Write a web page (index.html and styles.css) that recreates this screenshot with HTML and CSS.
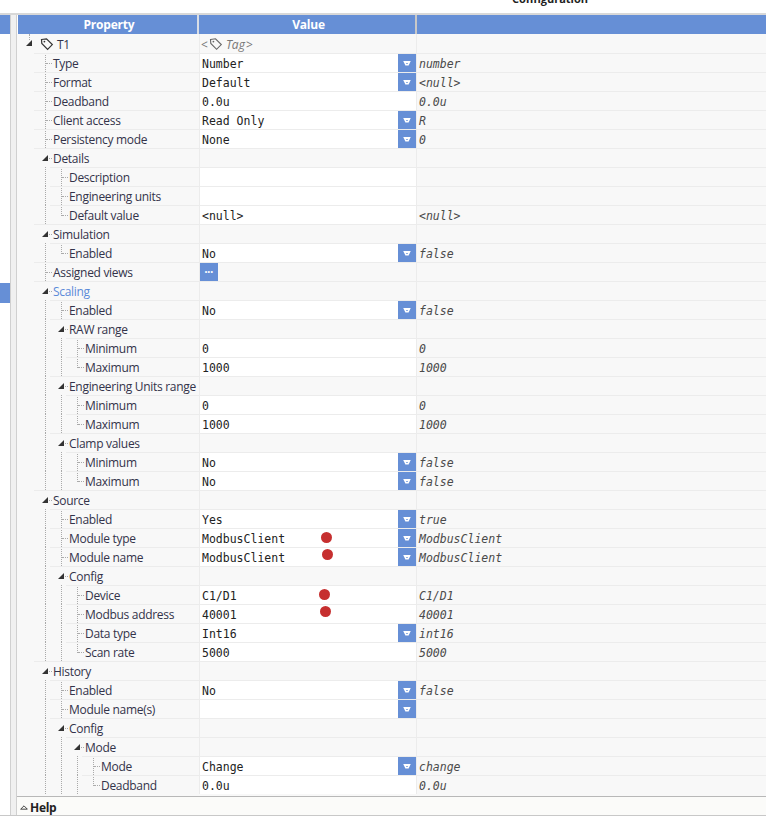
FILE: index.html
```html
<!DOCTYPE html>
<html lang="en">
<head>
<meta charset="utf-8">
<title>Tag configuration</title>
<link rel="stylesheet" href="styles.css">
</head>
<body>
<div class="window">
  <div class="topbar"><span class="topbar-title">Configuration</span></div>
  <div class="workspace">
    <aside class="side">
      <div class="side-head"></div>
      <div class="side-list"><div class="side-sel"></div></div>
    </aside>
    <div class="splitter"></div>
    <main class="panel">
      <div class="header">
        <div class="hcell hprop">Property</div>
        <div class="hcell hval">Value</div>
        <div class="hcell hraw"></div>
      </div>
      <div class="rows">

        <div class="row root">
          <div class="prop"><div class="body"><span class="mk open rootmk"><i class="tri"></i></span><svg class="tag" viewBox="0 0 14 14"><path d="M1.5 2.5 L6.5 1.8 L12.3 7.6 L7.6 12.3 L1.8 6.5 Z" fill="none" stroke="#333" stroke-width="1.2"/><circle cx="4.4" cy="4.6" r=".9" fill="#333"/></svg><span class="lab">T1</span></div></div>
          <div class="val group tagval"><span class="ang">&lt;</span><svg class="tag gray" viewBox="0 0 14 14"><path d="M1.5 2.5 L6.5 1.8 L12.3 7.6 L7.6 12.3 L1.8 6.5 Z" fill="none" stroke="#666" stroke-width="1.1"/><circle cx="4.4" cy="4.6" r=".9" fill="#666"/></svg><em>Tag</em><span class="ang">&gt;</span></div>
          <div class="raw"></div>
        </div>

        <div class="row"><div class="prop"><span class="g"></span><div class="body"><span class="mk tee"></span><span class="lab">Type</span></div></div><div class="val"><span class="txt">Number</span><span class="dd"><i></i></span></div><div class="raw">number</div></div>
        <div class="row"><div class="prop"><span class="g"></span><div class="body"><span class="mk tee"></span><span class="lab">Format</span></div></div><div class="val"><span class="txt">Default</span><span class="dd"><i></i></span></div><div class="raw">&lt;null&gt;</div></div>
        <div class="row"><div class="prop"><span class="g"></span><div class="body"><span class="mk tee"></span><span class="lab">Deadband</span></div></div><div class="val"><span class="txt">0.0u</span></div><div class="raw">0.0u</div></div>
        <div class="row"><div class="prop"><span class="g"></span><div class="body"><span class="mk tee"></span><span class="lab">Client access</span></div></div><div class="val"><span class="txt">Read Only</span><span class="dd"><i></i></span></div><div class="raw">R</div></div>
        <div class="row"><div class="prop"><span class="g"></span><div class="body"><span class="mk tee"></span><span class="lab">Persistency mode</span></div></div><div class="val"><span class="txt">None</span><span class="dd"><i></i></span></div><div class="raw">0</div></div>

        <div class="row"><div class="prop"><span class="g"></span><div class="body"><span class="mk open"><i class="tri"></i></span><span class="lab">Details</span></div></div><div class="val group"></div><div class="raw"></div></div>
        <div class="row"><div class="prop"><span class="g"></span><span class="g v"></span><div class="body"><span class="mk tee"></span><span class="lab">Description</span></div></div><div class="val"></div><div class="raw"></div></div>
        <div class="row"><div class="prop"><span class="g"></span><span class="g v"></span><div class="body"><span class="mk tee"></span><span class="lab">Engineering units</span></div></div><div class="val"></div><div class="raw"></div></div>
        <div class="row"><div class="prop"><span class="g"></span><span class="g v"></span><div class="body"><span class="mk ell"></span><span class="lab">Default value</span></div></div><div class="val"><span class="txt">&lt;null&gt;</span></div><div class="raw">&lt;null&gt;</div></div>

        <div class="row"><div class="prop"><span class="g"></span><div class="body"><span class="mk open"><i class="tri"></i></span><span class="lab">Simulation</span></div></div><div class="val group"></div><div class="raw"></div></div>
        <div class="row"><div class="prop"><span class="g"></span><span class="g v"></span><div class="body"><span class="mk ell"></span><span class="lab">Enabled</span></div></div><div class="val"><span class="txt">No</span><span class="dd"><i></i></span></div><div class="raw">false</div></div>
        <div class="row"><div class="prop"><span class="g"></span><div class="body"><span class="mk tee"></span><span class="lab">Assigned views</span></div></div><div class="val group"><span class="more">&#8226;&#8226;&#8226;</span></div><div class="raw"></div></div>

        <div class="row"><div class="prop"><span class="g"></span><div class="body"><span class="mk open"><i class="tri"></i></span><span class="lab link">Scaling</span></div></div><div class="val group"></div><div class="raw"></div></div>
        <div class="row"><div class="prop"><span class="g"></span><span class="g v"></span><div class="body"><span class="mk tee"></span><span class="lab">Enabled</span></div></div><div class="val"><span class="txt">No</span><span class="dd"><i></i></span></div><div class="raw">false</div></div>
        <div class="row"><div class="prop"><span class="g"></span><span class="g v"></span><div class="body"><span class="mk open"><i class="tri"></i></span><span class="lab">RAW range</span></div></div><div class="val group"></div><div class="raw"></div></div>
        <div class="row"><div class="prop"><span class="g"></span><span class="g v"></span><span class="g v"></span><div class="body"><span class="mk tee"></span><span class="lab">Minimum</span></div></div><div class="val"><span class="txt">0</span></div><div class="raw">0</div></div>
        <div class="row"><div class="prop"><span class="g"></span><span class="g v"></span><span class="g v"></span><div class="body"><span class="mk ell"></span><span class="lab">Maximum</span></div></div><div class="val"><span class="txt">1000</span></div><div class="raw">1000</div></div>
        <div class="row"><div class="prop"><span class="g"></span><span class="g v"></span><div class="body"><span class="mk open"><i class="tri"></i></span><span class="lab">Engineering Units range</span></div></div><div class="val group"></div><div class="raw"></div></div>
        <div class="row"><div class="prop"><span class="g"></span><span class="g v"></span><span class="g v"></span><div class="body"><span class="mk tee"></span><span class="lab">Minimum</span></div></div><div class="val"><span class="txt">0</span></div><div class="raw">0</div></div>
        <div class="row"><div class="prop"><span class="g"></span><span class="g v"></span><span class="g v"></span><div class="body"><span class="mk ell"></span><span class="lab">Maximum</span></div></div><div class="val"><span class="txt">1000</span></div><div class="raw">1000</div></div>
        <div class="row"><div class="prop"><span class="g"></span><span class="g v"></span><div class="body"><span class="mk open"><i class="tri"></i></span><span class="lab">Clamp values</span></div></div><div class="val group"></div><div class="raw"></div></div>
        <div class="row"><div class="prop"><span class="g"></span><span class="g v"></span><span class="g v"></span><div class="body"><span class="mk tee"></span><span class="lab">Minimum</span></div></div><div class="val"><span class="txt">No</span><span class="dd"><i></i></span></div><div class="raw">false</div></div>
        <div class="row"><div class="prop"><span class="g"></span><span class="g v"></span><span class="g v"></span><div class="body"><span class="mk ell"></span><span class="lab">Maximum</span></div></div><div class="val"><span class="txt">No</span><span class="dd"><i></i></span></div><div class="raw">false</div></div>

        <div class="row"><div class="prop"><span class="g"></span><div class="body"><span class="mk open"><i class="tri"></i></span><span class="lab">Source</span></div></div><div class="val group"></div><div class="raw"></div></div>
        <div class="row"><div class="prop"><span class="g"></span><span class="g v"></span><div class="body"><span class="mk tee"></span><span class="lab">Enabled</span></div></div><div class="val"><span class="txt">Yes</span><span class="dd"><i></i></span></div><div class="raw">true</div></div>
        <div class="row"><div class="prop"><span class="g"></span><span class="g v"></span><div class="body"><span class="mk tee"></span><span class="lab">Module type</span></div></div><div class="val"><span class="txt">ModbusClient</span><span class="dot d1"></span><span class="dd"><i></i></span></div><div class="raw">ModbusClient</div></div>
        <div class="row"><div class="prop"><span class="g"></span><span class="g v"></span><div class="body"><span class="mk tee"></span><span class="lab">Module name</span></div></div><div class="val"><span class="txt">ModbusClient</span><span class="dot d2"></span><span class="dd"><i></i></span></div><div class="raw">ModbusClient</div></div>
        <div class="row"><div class="prop"><span class="g"></span><span class="g v"></span><div class="body"><span class="mk open"><i class="tri"></i></span><span class="lab">Config</span></div></div><div class="val group"></div><div class="raw"></div></div>
        <div class="row"><div class="prop"><span class="g"></span><span class="g v"></span><span class="g v"></span><div class="body"><span class="mk tee"></span><span class="lab">Device</span></div></div><div class="val"><span class="txt">C1/D1</span><span class="dot d3"></span></div><div class="raw">C1/D1</div></div>
        <div class="row"><div class="prop"><span class="g"></span><span class="g v"></span><span class="g v"></span><div class="body"><span class="mk tee"></span><span class="lab">Modbus address</span></div></div><div class="val"><span class="txt">40001</span><span class="dot d4"></span></div><div class="raw">40001</div></div>
        <div class="row"><div class="prop"><span class="g"></span><span class="g v"></span><span class="g v"></span><div class="body"><span class="mk tee"></span><span class="lab">Data type</span></div></div><div class="val"><span class="txt">Int16</span><span class="dd"><i></i></span></div><div class="raw">int16</div></div>
        <div class="row"><div class="prop"><span class="g"></span><span class="g v"></span><span class="g v"></span><div class="body"><span class="mk ell"></span><span class="lab">Scan rate</span></div></div><div class="val"><span class="txt">5000</span></div><div class="raw">5000</div></div>

        <div class="row"><div class="prop"><span class="g"></span><div class="body"><span class="mk open"><i class="tri"></i></span><span class="lab">History</span></div></div><div class="val group"></div><div class="raw"></div></div>
        <div class="row"><div class="prop"><span class="g"></span><span class="g v"></span><div class="body"><span class="mk tee"></span><span class="lab">Enabled</span></div></div><div class="val"><span class="txt">No</span><span class="dd"><i></i></span></div><div class="raw">false</div></div>
        <div class="row"><div class="prop"><span class="g"></span><span class="g v"></span><div class="body"><span class="mk tee"></span><span class="lab">Module name(s)</span></div></div><div class="val"><span class="dd"><i></i></span></div><div class="raw"></div></div>
        <div class="row"><div class="prop"><span class="g"></span><span class="g v"></span><div class="body"><span class="mk open"><i class="tri"></i></span><span class="lab">Config</span></div></div><div class="val group"></div><div class="raw"></div></div>
        <div class="row"><div class="prop"><span class="g"></span><span class="g v"></span><span class="g v"></span><div class="body"><span class="mk open"><i class="tri"></i></span><span class="lab">Mode</span></div></div><div class="val group"></div><div class="raw"></div></div>
        <div class="row"><div class="prop"><span class="g"></span><span class="g v"></span><span class="g v"></span><span class="g v"></span><div class="body"><span class="mk tee"></span><span class="lab">Mode</span></div></div><div class="val"><span class="txt">Change</span><span class="dd"><i></i></span></div><div class="raw">change</div></div>
        <div class="row"><div class="prop"><span class="g"></span><span class="g v"></span><span class="g v"></span><span class="g v"></span><div class="body"><span class="mk ell"></span><span class="lab">Deadband</span></div></div><div class="val"><span class="txt">0.0u</span></div><div class="raw">0.0u</div></div>

      </div>
      <div class="help"><svg class="help-ic" viewBox="0 0 9 6"><path d="M0.5 5 L4.5 1 L8.5 5 Z" fill="none" stroke="#222" stroke-width="1"/></svg><span>Help</span></div>
    </main>
  </div>
</div>
</body>
</html>
```
FILE: styles.css
```css
* { box-sizing: border-box; }
html, body { margin: 0; padding: 0; background: #fff; }
body { width: 766px; height: 818px; overflow: hidden; font-family: "Open Sans", "Noto Sans", sans-serif; }
.window { width: 766px; height: 818px; display: flex; flex-direction: column; padding-bottom: 2px; }

.topbar { height: 15px; flex: none; background: #fff; border-bottom: 2px solid #d8d8d8; display: flex; justify-content: flex-end; padding-right: 178px; overflow: hidden; }
.topbar-title { font-size: 11px; font-weight: 700; line-height: 11px; margin-top: -7px; color: #222; }

.workspace { display: flex; flex: 1; min-height: 0; border-bottom: 1px solid #c8c8c8; }
.side { width: 10px; flex: none; background: #fff; display: flex; flex-direction: column; }
.side-head { height: 19px; background: #668fd6; }
.side-list { flex: 1; padding-top: 249px; }
.side-sel { height: 20px; background: #668fd6; }
.splitter { width: 7px; flex: none; background: #f0f0f0; border-left: 1px solid #d0d0d0; border-right: 1px solid #d0d0d0; }

.panel { flex: 1; min-width: 0; display: flex; flex-direction: column; background: #f8f8f8; }
.header { display: flex; height: 19px; flex: none; background: #668fd6; border-left: 1px solid #fff; }
.hcell { color: #fff; font-size: 12px; font-weight: 700; line-height: 19px; text-align: center; letter-spacing: -0.2px; }
.hprop { width: 181px; padding-left: 3px; border-right: 2px solid #d8dde6; }
.hval { width: 218px; padding-left: 3px; border-right: 2px solid #c8c8c8; }
.hraw { flex: 1; }

.rows { flex: 1; min-height: 0; overflow: hidden; }
.row { display: flex; height: 19px; }

.prop { width: 182px; flex: none; display: flex; padding-left: 1px; }
.g { width: 16px; flex: none; position: relative; }
.g.v::before { content: ""; position: absolute; left: 11px; top: 0; bottom: 0; border-left: 1px dotted #aaa; }
.body { flex: 1; min-width: 0; display: flex; align-items: center; border-top: 1px solid #ececec; padding-top: 1px; white-space: nowrap; overflow: hidden; }
.root .body { border-top: 0; }
.mk { width: 19px; height: 100%; flex: none; position: relative; }
.mk.tee::before { content: ""; position: absolute; left: 11px; top: -2px; bottom: 0; border-left: 1px dotted #aaa; }
.mk.tee::after { content: ""; position: absolute; left: 12px; top: 8px; width: 6px; border-top: 1px dotted #aaa; }
.mk.ell::before { content: ""; position: absolute; left: 11px; top: -2px; height: 11px; border-left: 1px dotted #aaa; }
.mk.ell::after { content: ""; position: absolute; left: 12px; top: 8px; width: 6px; border-top: 1px dotted #aaa; }
.mk.open::after { content: ""; position: absolute; left: 15px; top: 8px; width: 3px; border-top: 1px dotted #aaa; }
.tri { position: absolute; left: 8px; top: 5px; width: 0; height: 0; border-left: 6px solid transparent; border-bottom: 6px solid #333; }
.rootmk { width: 22px; }
.rootmk::before { content: ""; position: absolute; left: 11px; top: -1px; height: 6px; border-left: 1px dotted #aaa; }
.rootmk::after { display: none; }
.tag { width: 14px; height: 14px; flex: none; }
.root .tag { margin-right: 3px; }
.lab { font-size: 12px; color: #33334a; line-height: 17px; letter-spacing: -0.3px; }
.link { color: #5b8ad8; }

.val { width: 218px; flex: none; display: flex; align-items: center; background: #fff; border-top: 1px solid #ececec; border-left: 1px solid #ececec; border-right: 1px solid #ececec; padding-left: 2px; padding-top: 1px; position: relative; }
.val.group { background: #f8f8f8; }
.txt, .raw { font-family: "DejaVu Sans Mono", "Liberation Mono", monospace; font-size: 11.5px; color: #222; white-space: pre; }
.raw { flex: 1; border-top: 1px solid #ececec; padding-left: 2px; padding-top: 1px; font-style: italic; color: #4a4a4a; line-height: 18px; }
.root .raw { border-top: 0; }
.root .val { border-top: 0; }
.dd { position: absolute; right: 0; top: 0; width: 18px; height: 18px; background: #668fd6; display: flex; align-items: center; justify-content: center; }
.dd i { display: block; width: 8px; height: 5px; background: #fff; clip-path: polygon(0 0, 100% 0, 70% 100%, 30% 100%); position: relative; }
.dd i::after { content: ""; position: absolute; left: 3px; top: 2px; width: 2px; height: 1px; background: #8fb0e4; }
.more { width: 18px; height: 18px; background: #668fd6; color: #fff; font-size: 7px; line-height: 18px; text-align: center; margin-left: -2px; margin-top: -1px; letter-spacing: 0.4px; font-family: "Liberation Sans", sans-serif; }
.dot { position: absolute; width: 11px; height: 11px; border-radius: 50%; background: #c62f2f; }
.d1 { left: 121px; top: 3px; }
.d2 { left: 122px; top: 1px; }
.d3 { left: 119px; top: 3px; }
.d4 { left: 120px; top: 1px; }

.tagval { font-family: "Open Sans", sans-serif; font-size: 12px; color: #777; padding-left: 1px; }
.tagval .ang { color: #777; }
.tagval .tag { margin: 0 3px 0 1px; }
.tagval em { margin-right: 1px; }

.help { height: 19px; flex: none; background: #fbfbf9; border-top: 1px solid #b8b8b8; display: flex; align-items: center; padding-left: 3px; padding-top: 2px; font-size: 12px; font-weight: 700; color: #222; gap: 2px; letter-spacing: -0.3px; }
.help-ic { width: 8px; height: 5px; flex: none; }
```
